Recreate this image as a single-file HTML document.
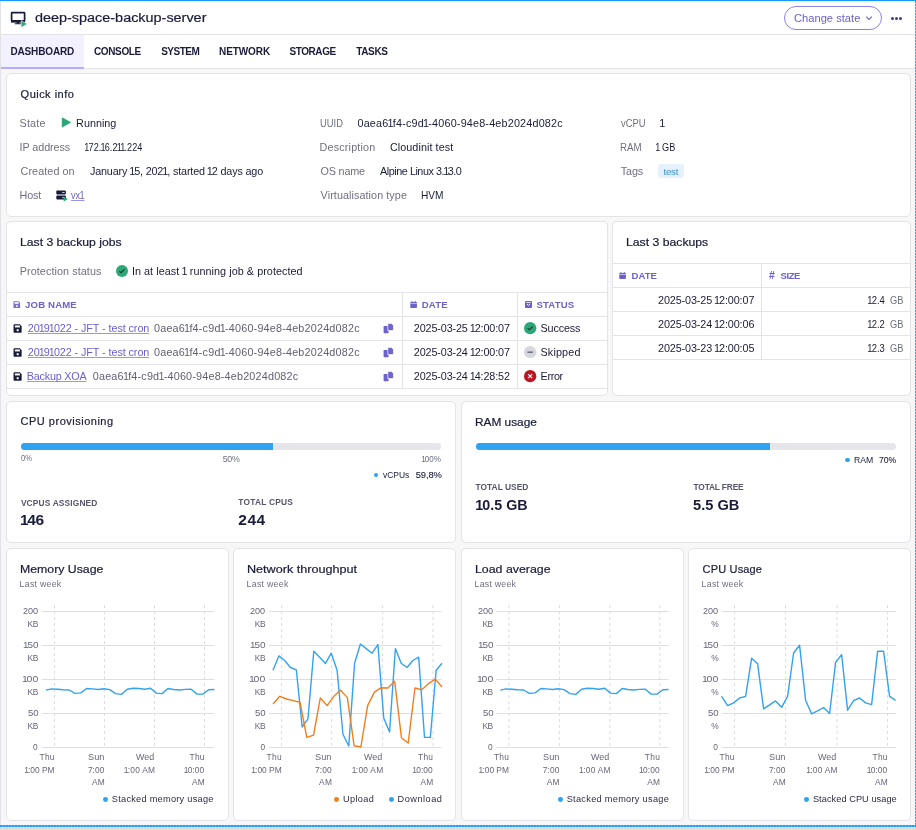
<!DOCTYPE html>
<html><head><meta charset="utf-8"><style>
html,body{margin:0;padding:0}
body{width:916px;height:830px;position:relative;overflow:hidden;background:#f7f7f8;font-family:'Liberation Sans', sans-serif}
.tw{position:absolute;left:0;top:0;width:916px;height:830px;will-change:transform}
.t{position:absolute;white-space:pre}
.t i{font-style:normal;margin:0 -0.9px}
.r{position:absolute}
.i{position:absolute;overflow:visible}
.card{position:absolute;box-sizing:border-box;background:#fff;border:1px solid #e3e3e8;border-radius:5px}
svg.ch{position:absolute;left:0;top:0}
</style></head><body>
<div class="r" style="left:0px;top:0px;width:916px;height:35px;background:#fff;"></div><div class="r" style="left:0px;top:35px;width:916px;height:33px;background:#fff;"></div><div class="r" style="left:1px;top:35px;width:83px;height:32px;background:#f3f1ff;"></div><div class="r" style="left:0px;top:34px;width:916px;height:1px;background:#e3e3e8;"></div><div class="r" style="left:0px;top:68px;width:916px;height:1px;background:#e3e3e8;"></div><div class="r" style="left:1px;top:67px;width:83px;height:2px;background:#b6aefa;"></div><div class="card" style="left:6px;top:73px;width:905px;height:144px;"></div><div class="card" style="left:6px;top:221px;width:602px;height:175px;"></div><div class="card" style="left:612px;top:221px;width:299px;height:175px;"></div><div class="card" style="left:6px;top:401px;width:450px;height:142px;"></div><div class="card" style="left:461px;top:401px;width:450px;height:142px;"></div><div class="card" style="left:6px;top:548px;width:223px;height:273px;"></div><div class="card" style="left:233px;top:548px;width:223px;height:273px;"></div><div class="card" style="left:461px;top:548px;width:223px;height:273px;"></div><div class="card" style="left:688px;top:548px;width:223px;height:273px;"></div><div class="r" style="left:7px;top:292px;width:600px;height:1px;background:#e3e3e8;"></div><div class="r" style="left:7px;top:316px;width:600px;height:1px;background:#e3e3e8;"></div><div class="r" style="left:7px;top:340px;width:600px;height:1px;background:#e3e3e8;"></div><div class="r" style="left:7px;top:364px;width:600px;height:1px;background:#e3e3e8;"></div><div class="r" style="left:7px;top:388px;width:600px;height:1px;background:#e3e3e8;"></div><div class="r" style="left:402px;top:293px;width:1px;height:95px;background:#e3e3e8;"></div><div class="r" style="left:517px;top:293px;width:1px;height:95px;background:#e3e3e8;"></div><div class="r" style="left:613px;top:263px;width:297px;height:1px;background:#e3e3e8;"></div><div class="r" style="left:613px;top:287px;width:297px;height:1px;background:#e3e3e8;"></div><div class="r" style="left:613px;top:311px;width:297px;height:1px;background:#e3e3e8;"></div><div class="r" style="left:613px;top:335px;width:297px;height:1px;background:#e3e3e8;"></div><div class="r" style="left:613px;top:359px;width:297px;height:1px;background:#e3e3e8;"></div><div class="r" style="left:761px;top:264px;width:1px;height:95px;background:#e3e3e8;"></div><div class="r" style="left:20.6px;top:443.3px;width:420.7px;height:6.3px;background:#e5e5ea;border-radius:4px;"></div><div class="r" style="left:20.6px;top:443.3px;width:252.6px;height:6.3px;background:#2ea3f2;border-radius:4px 0 0 4px;"></div><div class="r" style="left:475.6px;top:443.3px;width:420.6px;height:6.3px;background:#e5e5ea;border-radius:4px;"></div><div class="r" style="left:475.6px;top:443.3px;width:294.2px;height:6.3px;background:#2ea3f2;border-radius:4px 0 0 4px;"></div><div class="r" style="left:373.70px;top:472.60px;width:4.6px;height:4.6px;border-radius:50%;background:#2ea3f2"></div><div class="r" style="left:845.20px;top:457.70px;width:4.6px;height:4.6px;border-radius:50%;background:#2ea3f2"></div><div class="r" style="left:103.30px;top:796.80px;width:4.8px;height:4.8px;border-radius:50%;background:#2ea3f2"></div><div class="r" style="left:334.30px;top:796.80px;width:4.8px;height:4.8px;border-radius:50%;background:#f0821e"></div><div class="r" style="left:389.10px;top:796.80px;width:4.8px;height:4.8px;border-radius:50%;background:#2ea3f2"></div><div class="r" style="left:557.90px;top:796.80px;width:4.8px;height:4.8px;border-radius:50%;background:#2ea3f2"></div><div class="r" style="left:803.90px;top:796.80px;width:4.8px;height:4.8px;border-radius:50%;background:#2ea3f2"></div><div class="r" style="left:658.1px;top:163.5px;width:25.8px;height:14.3px;background:#e5f2fd;border-radius:3px;"></div><div class="r" style="left:784px;top:6px;width:98px;height:24px;border:1px solid #8c82e6;border-radius:12px;box-sizing:border-box"></div>
<svg class="ch" width="916" height="830" viewBox="0 0 916 830"><line x1="42.0" y1="611.5" x2="214.0" y2="611.5" stroke="#dedee4" stroke-width="1"/><line x1="42.0" y1="645.5" x2="214.0" y2="645.5" stroke="#dedee4" stroke-width="1"/><line x1="42.0" y1="679.5" x2="214.0" y2="679.5" stroke="#dedee4" stroke-width="1"/><line x1="42.0" y1="713.5" x2="214.0" y2="713.5" stroke="#dedee4" stroke-width="1"/><line x1="42.0" y1="747.5" x2="214.0" y2="747.5" stroke="#dedee4" stroke-width="1"/><line x1="54.5" y1="605" x2="54.5" y2="747" stroke="#dcdce3" stroke-width="1" stroke-dasharray="3 3"/><line x1="104.5" y1="605" x2="104.5" y2="747" stroke="#dcdce3" stroke-width="1" stroke-dasharray="3 3"/><line x1="154.5" y1="605" x2="154.5" y2="747" stroke="#dcdce3" stroke-width="1" stroke-dasharray="3 3"/><line x1="204.5" y1="605" x2="204.5" y2="747" stroke="#dcdce3" stroke-width="1" stroke-dasharray="3 3"/><line x1="268.9" y1="611.5" x2="441.5" y2="611.5" stroke="#dedee4" stroke-width="1"/><line x1="268.9" y1="645.5" x2="441.5" y2="645.5" stroke="#dedee4" stroke-width="1"/><line x1="268.9" y1="679.5" x2="441.5" y2="679.5" stroke="#dedee4" stroke-width="1"/><line x1="268.9" y1="713.5" x2="441.5" y2="713.5" stroke="#dedee4" stroke-width="1"/><line x1="268.9" y1="747.5" x2="441.5" y2="747.5" stroke="#dedee4" stroke-width="1"/><line x1="281.6" y1="605" x2="281.6" y2="747" stroke="#dcdce3" stroke-width="1" stroke-dasharray="3 3"/><line x1="331.7" y1="605" x2="331.7" y2="747" stroke="#dcdce3" stroke-width="1" stroke-dasharray="3 3"/><line x1="382.6" y1="605" x2="382.6" y2="747" stroke="#dcdce3" stroke-width="1" stroke-dasharray="3 3"/><line x1="433.0" y1="605" x2="433.0" y2="747" stroke="#dcdce3" stroke-width="1" stroke-dasharray="3 3"/><line x1="496.4" y1="611.5" x2="668.6" y2="611.5" stroke="#dedee4" stroke-width="1"/><line x1="496.4" y1="645.5" x2="668.6" y2="645.5" stroke="#dedee4" stroke-width="1"/><line x1="496.4" y1="679.5" x2="668.6" y2="679.5" stroke="#dedee4" stroke-width="1"/><line x1="496.4" y1="713.5" x2="668.6" y2="713.5" stroke="#dedee4" stroke-width="1"/><line x1="496.4" y1="747.5" x2="668.6" y2="747.5" stroke="#dedee4" stroke-width="1"/><line x1="508.9" y1="605" x2="508.9" y2="747" stroke="#dcdce3" stroke-width="1" stroke-dasharray="3 3"/><line x1="559.4" y1="605" x2="559.4" y2="747" stroke="#dcdce3" stroke-width="1" stroke-dasharray="3 3"/><line x1="609.9" y1="605" x2="609.9" y2="747" stroke="#dcdce3" stroke-width="1" stroke-dasharray="3 3"/><line x1="659.8" y1="605" x2="659.8" y2="747" stroke="#dcdce3" stroke-width="1" stroke-dasharray="3 3"/><line x1="722.0" y1="611.5" x2="896.0" y2="611.5" stroke="#dedee4" stroke-width="1"/><line x1="722.0" y1="645.5" x2="896.0" y2="645.5" stroke="#dedee4" stroke-width="1"/><line x1="722.0" y1="679.5" x2="896.0" y2="679.5" stroke="#dedee4" stroke-width="1"/><line x1="722.0" y1="713.5" x2="896.0" y2="713.5" stroke="#dedee4" stroke-width="1"/><line x1="722.0" y1="747.5" x2="896.0" y2="747.5" stroke="#dedee4" stroke-width="1"/><line x1="734.5" y1="605" x2="734.5" y2="747" stroke="#dcdce3" stroke-width="1" stroke-dasharray="3 3"/><line x1="785.5" y1="605" x2="785.5" y2="747" stroke="#dcdce3" stroke-width="1" stroke-dasharray="3 3"/><line x1="837.0" y1="605" x2="837.0" y2="747" stroke="#dcdce3" stroke-width="1" stroke-dasharray="3 3"/><line x1="887.5" y1="605" x2="887.5" y2="747" stroke="#dcdce3" stroke-width="1" stroke-dasharray="3 3"/><polyline points="45.90,690.1 51.71,688.9 57.52,689.2 63.33,689.8 69.14,690.0 74.95,693.4 80.76,692.9 86.57,688.5 92.38,688.9 98.19,689.5 104.00,688.7 109.81,689.6 115.62,693.6 121.43,694.4 127.24,689.3 133.06,688.2 138.87,688.5 144.68,689.2 150.49,688.2 156.30,693.1 162.11,693.6 167.92,688.5 173.73,689.5 179.54,690.0 185.35,689.4 191.16,689.2 196.97,694.1 202.78,694.1 208.59,689.8 214.40,689.5" fill="none" stroke="#33a3ef" stroke-width="1.4" stroke-linejoin="round"/><polyline points="500.30,690.1 506.10,688.9 511.91,689.2 517.71,689.8 523.51,690.0 529.32,693.4 535.12,692.9 540.92,688.5 546.73,688.9 552.53,689.5 558.33,688.7 564.14,689.6 569.94,693.6 575.74,694.4 581.55,689.3 587.35,688.2 593.16,688.5 598.96,689.2 604.76,688.2 610.57,693.1 616.37,693.6 622.17,688.5 627.98,689.5 633.78,690.0 639.58,689.4 645.39,689.2 651.19,694.1 656.99,694.1 662.80,689.8 668.60,689.5" fill="none" stroke="#33a3ef" stroke-width="1.4" stroke-linejoin="round"/><polyline points="273.00,670.2 278.83,655.9 284.66,660.5 290.48,667.5 296.31,669.8 302.14,727.0 307.97,718.8 313.79,651.3 319.62,657.2 325.45,663.4 331.28,653.2 337.10,670.2 342.93,734.3 348.76,746.0 354.59,663.2 360.41,644.0 366.24,648.6 372.07,653.2 377.90,644.6 383.72,718.0 389.55,732.0 395.38,648.6 401.21,663.2 407.03,667.5 412.86,660.5 418.69,657.2 424.52,737.4 430.34,737.4 436.17,670.2 442.00,663.2" fill="none" stroke="#33a3ef" stroke-width="1.4" stroke-linejoin="round"/><polyline points="273.00,704.0 279.76,696.3 286.52,699.0 293.28,700.6 300.04,702.3 306.80,737.4 313.56,735.1 320.32,697.9 327.08,705.6 333.84,696.3 340.60,690.1 347.36,697.6 354.12,745.7 360.88,747.0 367.64,705.6 374.40,692.1 381.16,687.7 387.92,688.0 394.68,681.3 401.44,737.7 408.20,743.0 414.96,688.0 421.72,689.7 428.48,683.7 435.24,679.1 442.00,687.0" fill="none" stroke="#ef7f1f" stroke-width="1.4" stroke-linejoin="round"/><polyline points="721.60,696.3 727.60,705.6 733.60,702.9 739.60,698.0 745.60,696.3 751.60,658.3 757.60,663.8 763.60,708.9 769.60,704.9 775.60,700.9 781.60,707.3 787.60,696.3 793.60,653.0 799.60,645.3 805.60,700.3 811.60,713.9 817.60,710.9 823.60,707.5 829.60,713.5 835.60,662.5 841.60,654.6 847.60,710.2 853.60,700.7 859.60,698.0 865.60,702.9 871.60,704.6 877.60,651.3 883.60,651.3 889.60,696.3 895.60,700.3" fill="none" stroke="#33a3ef" stroke-width="1.4" stroke-linejoin="round"/></svg>
<svg class="i" style="left:10px;top:11px" width="18" height="17" viewBox="0 0 18 17">
<rect x="1.6" y="1.6" width="13" height="8.4" rx="0.6" fill="none" stroke="#1a1b38" stroke-width="1.7"/>
<rect x="1" y="9" width="14" height="2.6" fill="#1a1b38"/>
<rect x="6.6" y="11" width="2.8" height="1.6" fill="#1a1b38"/>
<rect x="4.6" y="12.2" width="6.6" height="1.1" rx="0.5" fill="#1a1b38"/>
<path d="M11.2 9.5 L17.2 13 L11.2 16.5 Z" fill="#2ca878" stroke="#fff" stroke-width="0.5" stroke-linejoin="round"/>
</svg><div class="r" style="left:891.00px;top:16.50px;width:3.0px;height:3.0px;border-radius:50%;background:#3f3a8c"></div><div class="r" style="left:895.20px;top:16.50px;width:3.0px;height:3.0px;border-radius:50%;background:#3f3a8c"></div><div class="r" style="left:899.40px;top:16.50px;width:3.0px;height:3.0px;border-radius:50%;background:#3f3a8c"></div><svg class="i" style="left:865px;top:15px" width="8" height="6" viewBox="0 0 8 6"><path d="M1.2 1.6 L4 4.4 L6.8 1.6" fill="none" stroke="#6d62cc" stroke-width="1.1"/></svg><svg class="i" style="left:61px;top:117px" width="11" height="11" viewBox="0 0 11 11"><path d="M0.8 0.9 Q0.8 0.2 1.5 0.5 L9.6 4.9 Q10.2 5.3 9.6 5.7 L1.5 10.3 Q0.8 10.6 0.8 9.9 Z" fill="#2ca878"/></svg><svg class="i" style="left:56px;top:190px" width="12" height="12" viewBox="0 0 12 12">
<rect x="0.3" y="0.6" width="9.6" height="4" rx="1" fill="#1a1b38"/>
<rect x="0.3" y="5.6" width="9.6" height="4" rx="1" fill="#1a1b38"/>
<rect x="6.2" y="2" width="2.4" height="1" fill="#c9c9d6"/>
<rect x="6.2" y="7" width="2.4" height="1" fill="#c9c9d6"/>
<path d="M7.7 6.8 L12 9 L7.7 11.4 Z" fill="#2ca878"/>
</svg><svg class="i" style="left:116px;top:264.6px" width="12" height="12" viewBox="0 0 12 12"><circle cx="6" cy="6" r="6" fill="#2ca878"/><path d="M3.4 6.1 L5.1 7.7 L8.4 4.3" fill="none" stroke="#173c2e" stroke-width="1.2"/></svg><svg class="i" style="left:12.8px;top:300.8px" width="7.4" height="7.4" viewBox="0 0 10 10">
<path d="M0.6 1.2 Q0.6 0.4 1.4 0.4 L7.6 0.4 L9.6 2.4 L9.6 8.8 Q9.6 9.6 8.8 9.6 L1.4 9.6 Q0.6 9.6 0.6 8.8 Z" fill="#7a6fd3"/>
<rect x="2.1" y="1.6" width="5.6" height="2.2" fill="#fff"/>
<rect x="4.1" y="5.8" width="2.2" height="2.2" fill="#fff"/>
</svg><svg class="i" style="left:13.4px;top:323.9px" width="9.0" height="9.0" viewBox="0 0 10 10">
<path d="M0.6 1.2 Q0.6 0.4 1.4 0.4 L7.6 0.4 L9.6 2.4 L9.6 8.8 Q9.6 9.6 8.8 9.6 L1.4 9.6 Q0.6 9.6 0.6 8.8 Z" fill="#1a1b38"/>
<rect x="2.1" y="1.6" width="5.6" height="2.2" fill="#fff"/>
<rect x="4.1" y="5.8" width="2.2" height="2.2" fill="#fff"/>
</svg><svg class="i" style="left:13.4px;top:347.9px" width="9.0" height="9.0" viewBox="0 0 10 10">
<path d="M0.6 1.2 Q0.6 0.4 1.4 0.4 L7.6 0.4 L9.6 2.4 L9.6 8.8 Q9.6 9.6 8.8 9.6 L1.4 9.6 Q0.6 9.6 0.6 8.8 Z" fill="#1a1b38"/>
<rect x="2.1" y="1.6" width="5.6" height="2.2" fill="#fff"/>
<rect x="4.1" y="5.8" width="2.2" height="2.2" fill="#fff"/>
</svg><svg class="i" style="left:13.4px;top:372.0px" width="9.0" height="9.0" viewBox="0 0 10 10">
<path d="M0.6 1.2 Q0.6 0.4 1.4 0.4 L7.6 0.4 L9.6 2.4 L9.6 8.8 Q9.6 9.6 8.8 9.6 L1.4 9.6 Q0.6 9.6 0.6 8.8 Z" fill="#1a1b38"/>
<rect x="2.1" y="1.6" width="5.6" height="2.2" fill="#fff"/>
<rect x="4.1" y="5.8" width="2.2" height="2.2" fill="#fff"/>
</svg><svg class="i" style="left:383.2px;top:323.0px" width="11" height="11" viewBox="0 0 11 11">
<rect x="0.6" y="3" width="5" height="7.2" rx="0.6" fill="#6d62cc"/>
<path d="M4.8 0.6 L8.6 0.6 L10.4 2.4 L10.4 7.6 L4.8 7.6 Z" fill="#6d62cc" stroke="#fff" stroke-width="0.7"/>
</svg><svg class="i" style="left:383.2px;top:347.0px" width="11" height="11" viewBox="0 0 11 11">
<rect x="0.6" y="3" width="5" height="7.2" rx="0.6" fill="#6d62cc"/>
<path d="M4.8 0.6 L8.6 0.6 L10.4 2.4 L10.4 7.6 L4.8 7.6 Z" fill="#6d62cc" stroke="#fff" stroke-width="0.7"/>
</svg><svg class="i" style="left:383.2px;top:371.2px" width="11" height="11" viewBox="0 0 11 11">
<rect x="0.6" y="3" width="5" height="7.2" rx="0.6" fill="#6d62cc"/>
<path d="M4.8 0.6 L8.6 0.6 L10.4 2.4 L10.4 7.6 L4.8 7.6 Z" fill="#6d62cc" stroke="#fff" stroke-width="0.7"/>
</svg><svg class="i" style="left:409.8px;top:301.0px" width="7.2" height="7.2" viewBox="0 0 8 8">
<rect x="0.3" y="1.2" width="7.4" height="6.6" rx="0.8" fill="#6d62cc"/>
<rect x="1.6" y="0" width="1.1" height="1.8" fill="#6d62cc"/><rect x="5.3" y="0" width="1.1" height="1.8" fill="#6d62cc"/>
<rect x="0.3" y="2.6" width="7.4" height="0.6" fill="#fff"/>
</svg><svg class="i" style="left:619.4px;top:272.0px" width="7.2" height="7.2" viewBox="0 0 8 8">
<rect x="0.3" y="1.2" width="7.4" height="6.6" rx="0.8" fill="#6d62cc"/>
<rect x="1.6" y="0" width="1.1" height="1.8" fill="#6d62cc"/><rect x="5.3" y="0" width="1.1" height="1.8" fill="#6d62cc"/>
<rect x="0.3" y="2.6" width="7.4" height="0.6" fill="#fff"/>
</svg><svg class="i" style="left:524.6px;top:301.4px" width="7" height="7" viewBox="0 0 7 7"><rect x="0" y="0" width="7" height="7" rx="0.8" fill="#6d62cc"/><path d="M2 3 L3.5 4.5 L5 3" fill="none" stroke="#fff" stroke-width="1"/><rect x="1.2" y="1.2" width="4.6" height="0.8" fill="#fff"/></svg><svg class="i" style="left:524.3px;top:322.1px" width="12.3" height="12.3" viewBox="0 0 12 12"><circle cx="6" cy="6" r="6" fill="#2ca878"/><path d="M3.5 6.1 L5.1 7.6 L8.4 4.4" fill="none" stroke="#173c2e" stroke-width="1.1"/></svg><svg class="i" style="left:524.3px;top:346.0px" width="12.3" height="12.3" viewBox="0 0 12 12"><circle cx="6" cy="6" r="6" fill="#d7d7de"/><rect x="3.3" y="5.5" width="5.4" height="1" fill="#3a3b55"/></svg><svg class="i" style="left:524.3px;top:370.2px" width="12.3" height="12.3" viewBox="0 0 12 12"><circle cx="6" cy="6" r="6" fill="#c0121f"/><path d="M4 4 L8 8 M8 4 L4 8" stroke="#fff" stroke-width="1.1"/></svg>
<div class="tw"><div class="t" style="left:35.40px;top:11.60px;font-size:12.5px;line-height:12.5px;color:#1a1b38;transform:scaleX(1.153);transform-origin:0 0;-webkit-text-stroke:0.2px #1a1b38;">deep-space-backup-server</div><div class="t" style="left:793.60px;top:13.70px;font-size:10.2px;line-height:10.2px;color:#6d62cc;transform:scaleX(1.095);transform-origin:0 0;">Change state</div><div class="t" style="left:10.40px;top:47.10px;font-size:10.0px;line-height:10.0px;color:#1a1b38;font-weight:700;letter-spacing:-0.138px;">DASHBOARD</div><div class="t" style="left:94.00px;top:47.10px;font-size:10.0px;line-height:10.0px;color:#1a1b38;font-weight:700;letter-spacing:-0.367px;">CONSOLE</div><div class="t" style="left:161.20px;top:47.10px;font-size:10.0px;line-height:10.0px;color:#1a1b38;font-weight:700;letter-spacing:-0.5px;">SYSTEM</div><div class="t" style="left:219.00px;top:47.10px;font-size:10.0px;line-height:10.0px;color:#1a1b38;font-weight:700;letter-spacing:-0.083px;">NETWORK</div><div class="t" style="left:289.40px;top:47.10px;font-size:10.0px;line-height:10.0px;color:#1a1b38;font-weight:700;letter-spacing:-0.417px;">STORAGE</div><div class="t" style="left:356.20px;top:47.10px;font-size:10.0px;line-height:10.0px;color:#1a1b38;font-weight:700;letter-spacing:-0.35px;">TASKS</div><div class="t" style="left:20.60px;top:89.00px;font-size:11px;line-height:11px;color:#1a1b38;letter-spacing:0.478px;-webkit-text-stroke:0.2px #1a1b38;">Quick info</div><div class="t" style="left:19.60px;top:117.70px;font-size:10.8px;line-height:10.8px;color:#6f6f82;letter-spacing:0.15px;">State</div><div class="t" style="left:76.10px;top:117.70px;font-size:10.8px;line-height:10.8px;color:#1a1b38;">Running</div><div class="t" style="left:19.60px;top:141.70px;font-size:10.8px;line-height:10.8px;color:#6f6f82;letter-spacing:-0.089px;">IP address</div><div class="t" style="left:85.00px;top:141.70px;font-size:10.8px;line-height:10.8px;color:#1a1b38;transform:scaleX(0.8426);transform-origin:0 0;"><i>1</i>72.<i>1</i>6.2<i>1</i><i>1</i>.224</div><div class="t" style="left:20.60px;top:165.80px;font-size:10.8px;line-height:10.8px;color:#6f6f82;letter-spacing:0.067px;">Created on</div><div class="t" style="left:89.90px;top:165.80px;font-size:10.8px;line-height:10.8px;color:#1a1b38;letter-spacing:-0.158px;">January <i>1</i>5, 202<i>1</i>, started <i>1</i>2 days ago</div><div class="t" style="left:19.60px;top:189.90px;font-size:10.8px;line-height:10.8px;color:#6f6f82;letter-spacing:-0.167px;">Host</div><div class="t" style="left:70.90px;top:189.90px;font-size:10.8px;line-height:10.8px;color:#6a5fd0;transform:scaleX(0.85);transform-origin:0 0;text-decoration:underline;text-underline-offset:1px;text-decoration-thickness:1px;text-decoration-color:#9d94ea;text-decoration-skip-ink:none;">vx<i>1</i></div><div class="t" style="left:319.60px;top:117.70px;font-size:10.8px;line-height:10.8px;color:#6f6f82;transform:scaleX(0.868);transform-origin:0 0;">UUID</div><div class="t" style="left:357.50px;top:117.70px;font-size:10.8px;line-height:10.8px;color:#1a1b38;letter-spacing:0.18px;">0aea6<i>1</i>f4-c9d<i>1</i>-4060-94e8-4eb2024d082c</div><div class="t" style="left:319.60px;top:141.70px;font-size:10.8px;line-height:10.8px;color:#6f6f82;letter-spacing:0.16px;">Description</div><div class="t" style="left:389.90px;top:141.70px;font-size:10.8px;line-height:10.8px;color:#1a1b38;letter-spacing:0.069px;">Cloudinit test</div><div class="t" style="left:320.60px;top:165.80px;font-size:10.8px;line-height:10.8px;color:#6f6f82;letter-spacing:-0.2px;">OS name</div><div class="t" style="left:380.10px;top:165.80px;font-size:10.8px;line-height:10.8px;color:#1a1b38;letter-spacing:-0.461px;">Alpine Linux 3.<i>1</i>3.0</div><div class="t" style="left:320.60px;top:189.90px;font-size:10.8px;line-height:10.8px;color:#6f6f82;letter-spacing:0.072px;">Virtualisation type</div><div class="t" style="left:421.30px;top:189.90px;font-size:10.8px;line-height:10.8px;color:#1a1b38;transform:scaleX(0.9409);transform-origin:0 0;">HVM</div><div class="t" style="left:620.80px;top:117.70px;font-size:10.8px;line-height:10.8px;color:#6f6f82;transform:scaleX(0.8679);transform-origin:0 0;">vCPU</div><div class="t" style="left:660.10px;top:117.70px;font-size:10.8px;line-height:10.8px;color:#1a1b38;"><i>1</i></div><div class="t" style="left:619.80px;top:141.70px;font-size:10.8px;line-height:10.8px;color:#6f6f82;transform:scaleX(0.9);transform-origin:0 0;">RAM</div><div class="t" style="left:656.20px;top:141.70px;font-size:10.8px;line-height:10.8px;color:#1a1b38;transform:scaleX(0.8455);transform-origin:0 0;"><i>1</i> GB</div><div class="t" style="left:620.80px;top:165.80px;font-size:10.8px;line-height:10.8px;color:#6f6f82;letter-spacing:-0.133px;">Tags</div><div class="t" style="left:663.50px;top:166.80px;font-size:9.8px;line-height:9.8px;color:#3d8fd0;letter-spacing:-0.3px;">test</div><div class="t" style="left:19.70px;top:237.30px;font-size:11px;line-height:11px;color:#1a1b38;transform:scaleX(1.1066);transform-origin:0 0;-webkit-text-stroke:0.2px #1a1b38;">Last 3 backup jobs</div><div class="t" style="left:19.70px;top:265.50px;font-size:10.8px;line-height:10.8px;color:#6f6f82;letter-spacing:0.081px;">Protection status</div><div class="t" style="left:131.90px;top:265.50px;font-size:10.8px;line-height:10.8px;color:#1a1b38;letter-spacing:0.056px;">In at least <i>1</i> running job &amp; protected</div><div class="t" style="left:25.10px;top:299.90px;font-size:9.6px;line-height:9.6px;color:#6d62cc;font-weight:700;letter-spacing:0.143px;">JOB NAME</div><div class="t" style="left:421.80px;top:300.00px;font-size:9.6px;line-height:9.6px;color:#6d62cc;font-weight:700;letter-spacing:0.133px;">DATE</div><div class="t" style="left:536.50px;top:300.00px;font-size:9.6px;line-height:9.6px;color:#6d62cc;font-weight:700;letter-spacing:0.16px;">STATUS</div><div class="t" style="left:27.80px;top:322.70px;font-size:10.8px;line-height:10.8px;color:#6a5fd0;letter-spacing:-0.08px;text-decoration:underline;text-underline-offset:1px;text-decoration-thickness:1px;text-decoration-color:#9d94ea;text-decoration-skip-ink:none;">20<i>1</i>9<i>1</i>022 - JFT - test cron</div><div class="t" style="left:154.00px;top:322.70px;font-size:10.8px;line-height:10.8px;color:#5f5f72;letter-spacing:0.194px;">0aea6<i>1</i>f4-c9d<i>1</i>-4060-94e8-4eb2024d082c</div><div class="t" style="left:27.80px;top:346.70px;font-size:10.8px;line-height:10.8px;color:#6a5fd0;letter-spacing:-0.08px;text-decoration:underline;text-underline-offset:1px;text-decoration-thickness:1px;text-decoration-color:#9d94ea;text-decoration-skip-ink:none;">20<i>1</i>9<i>1</i>022 - JFT - test cron</div><div class="t" style="left:154.00px;top:346.70px;font-size:10.8px;line-height:10.8px;color:#5f5f72;letter-spacing:0.194px;">0aea6<i>1</i>f4-c9d<i>1</i>-4060-94e8-4eb2024d082c</div><div class="t" style="left:26.80px;top:371.00px;font-size:10.8px;line-height:10.8px;color:#6a5fd0;letter-spacing:-0.222px;text-decoration:underline;text-underline-offset:1px;text-decoration-thickness:1px;text-decoration-color:#9d94ea;text-decoration-skip-ink:none;">Backup XOA</div><div class="t" style="left:92.80px;top:371.00px;font-size:10.8px;line-height:10.8px;color:#5f5f72;letter-spacing:0.186px;">0aea6<i>1</i>f4-c9d<i>1</i>-4060-94e8-4eb2024d082c</div><div class="t" style="left:413.80px;top:322.70px;font-size:10.8px;line-height:10.8px;color:#1a1b38;letter-spacing:-0.128px;">2025-03-25 <i>1</i>2:00:07</div><div class="t" style="left:413.80px;top:346.70px;font-size:10.8px;line-height:10.8px;color:#1a1b38;letter-spacing:-0.128px;">2025-03-24 <i>1</i>2:00:07</div><div class="t" style="left:413.80px;top:371.00px;font-size:10.8px;line-height:10.8px;color:#1a1b38;letter-spacing:-0.128px;">2025-03-24 <i>1</i>4:28:52</div><div class="t" style="left:540.50px;top:322.70px;font-size:10.8px;line-height:10.8px;color:#1a1b38;letter-spacing:-0.15px;">Success</div><div class="t" style="left:540.50px;top:346.70px;font-size:10.8px;line-height:10.8px;color:#1a1b38;letter-spacing:0.15px;">Skipped</div><div class="t" style="left:540.50px;top:371.00px;font-size:10.8px;line-height:10.8px;color:#1a1b38;letter-spacing:-0.325px;">Error</div><div class="t" style="left:625.90px;top:237.10px;font-size:11px;line-height:11px;color:#1a1b38;transform:scaleX(1.111);transform-origin:0 0;-webkit-text-stroke:0.2px #1a1b38;">Last 3 backups</div><div class="t" style="left:631.40px;top:271.30px;font-size:9.6px;line-height:9.6px;color:#6d62cc;font-weight:700;letter-spacing:0.067px;">DATE</div><div class="t" style="left:769.10px;top:270.90px;font-size:10.4px;line-height:10.4px;color:#6d62cc;font-weight:700;">#</div><div class="t" style="left:780.60px;top:270.80px;font-size:9.6px;line-height:9.6px;color:#6d62cc;font-weight:700;letter-spacing:-0.5px;">SIZE</div><div class="t" style="left:658.00px;top:294.50px;font-size:10.8px;line-height:10.8px;color:#1a1b38;letter-spacing:-0.117px;">2025-03-25 <i>1</i>2:00:07</div><div class="t" style="left:658.00px;top:318.60px;font-size:10.8px;line-height:10.8px;color:#1a1b38;letter-spacing:-0.117px;">2025-03-24 <i>1</i>2:00:06</div><div class="t" style="left:658.00px;top:342.60px;font-size:10.8px;line-height:10.8px;color:#1a1b38;letter-spacing:-0.117px;">2025-03-23 <i>1</i>2:00:05</div><div class="t" style="left:868.00px;top:294.50px;font-size:10.8px;line-height:10.8px;color:#1a1b38;transform:scaleX(0.8737);transform-origin:0 0;"><i>1</i>2.4</div><div class="t" style="left:890.00px;top:295.50px;font-size:10.0px;line-height:10.0px;color:#6f6f82;transform:scaleX(0.9286);transform-origin:0 0;">GB</div><div class="t" style="left:868.00px;top:318.60px;font-size:10.8px;line-height:10.8px;color:#1a1b38;transform:scaleX(0.8737);transform-origin:0 0;"><i>1</i>2.2</div><div class="t" style="left:890.00px;top:319.60px;font-size:10.0px;line-height:10.0px;color:#6f6f82;transform:scaleX(0.9286);transform-origin:0 0;">GB</div><div class="t" style="left:868.00px;top:342.60px;font-size:10.8px;line-height:10.8px;color:#1a1b38;transform:scaleX(0.8737);transform-origin:0 0;"><i>1</i>2.3</div><div class="t" style="left:890.00px;top:343.60px;font-size:10.0px;line-height:10.0px;color:#6f6f82;transform:scaleX(0.9286);transform-origin:0 0;">GB</div><div class="t" style="left:20.60px;top:416.20px;font-size:11px;line-height:11px;color:#1a1b38;letter-spacing:0.5px;-webkit-text-stroke:0.2px #1a1b38;">CPU provisioning</div><div class="t" style="left:20.60px;top:454.40px;font-size:8.8px;line-height:8.8px;color:#6f6f82;transform:scaleX(0.8692);transform-origin:0 0;">0%</div><div class="t" style="left:222.70px;top:454.60px;font-size:8.8px;line-height:8.8px;color:#6f6f82;letter-spacing:-0.25px;">50%</div><div class="t" style="left:422.00px;top:454.60px;font-size:8.8px;line-height:8.8px;color:#6f6f82;transform:scaleX(0.919);transform-origin:0 0;"><i>1</i>00%</div><div class="t" style="left:383.00px;top:469.60px;font-size:9.4px;line-height:9.4px;color:#1a1b38;transform:scaleX(0.9034);transform-origin:0 0;">vCPUs</div><div class="t" style="left:415.70px;top:469.60px;font-size:9.4px;line-height:9.4px;color:#1a1b38;letter-spacing:-0.1px;-webkit-text-stroke:0.1px #1a1b38;">59,8%</div><div class="t" style="left:20.90px;top:498.50px;font-size:8.4px;line-height:8.4px;color:#55566c;font-weight:700;letter-spacing:0.146px;">VCPUS ASSIGNED</div><div class="t" style="left:20.90px;top:512.10px;font-size:15.5px;line-height:15.5px;color:#1a1b38;font-weight:700;letter-spacing:-0.45px;"><i>1</i>46</div><div class="t" style="left:238.30px;top:498.40px;font-size:8.4px;line-height:8.4px;color:#55566c;font-weight:700;letter-spacing:0.222px;">TOTAL CPUS</div><div class="t" style="left:238.30px;top:512.30px;font-size:15.5px;line-height:15.5px;color:#1a1b38;font-weight:700;letter-spacing:0.5px;">244</div><div class="t" style="left:474.60px;top:416.50px;font-size:11px;line-height:11px;color:#1a1b38;transform:scaleX(1.0768);transform-origin:0 0;-webkit-text-stroke:0.2px #1a1b38;">RAM usage</div><div class="t" style="left:853.80px;top:455.00px;font-size:9.4px;line-height:9.4px;color:#1a1b38;transform:scaleX(0.9263);transform-origin:0 0;">RAM</div><div class="t" style="left:878.80px;top:455.00px;font-size:9.4px;line-height:9.4px;color:#1a1b38;transform:scaleX(0.9158);transform-origin:0 0;-webkit-text-stroke:0.1px #1a1b38;">70%</div><div class="t" style="left:475.60px;top:483.30px;font-size:8.4px;line-height:8.4px;color:#55566c;font-weight:700;letter-spacing:0.011px;">TOTAL USED</div><div class="t" style="left:475.60px;top:497.20px;font-size:15.5px;line-height:15.5px;color:#1a1b38;font-weight:700;transform:scaleX(0.9218);transform-origin:0 0;"><i>1</i>0.5 GB</div><div class="t" style="left:693.50px;top:483.30px;font-size:8.4px;line-height:8.4px;color:#55566c;font-weight:700;letter-spacing:-0.167px;">TOTAL FREE</div><div class="t" style="left:692.50px;top:497.20px;font-size:15.5px;line-height:15.5px;color:#1a1b38;font-weight:700;transform:scaleX(0.9437);transform-origin:0 0;">5.5 GB</div><div class="t" style="left:19.60px;top:564.00px;font-size:11px;line-height:11px;color:#1a1b38;transform:scaleX(1.1178);transform-origin:0 0;-webkit-text-stroke:0.2px #1a1b38;">Memory Usage</div><div class="t" style="left:19.60px;top:580.30px;font-size:8.8px;line-height:8.8px;color:#6f6f82;letter-spacing:0.25px;">Last week</div><div class="t" style="left:246.60px;top:564.00px;font-size:11px;line-height:11px;color:#1a1b38;transform:scaleX(1.1463);transform-origin:0 0;-webkit-text-stroke:0.2px #1a1b38;">Network throughput</div><div class="t" style="left:246.60px;top:580.30px;font-size:8.8px;line-height:8.8px;color:#6f6f82;letter-spacing:0.263px;">Last week</div><div class="t" style="left:474.60px;top:564.00px;font-size:11px;line-height:11px;color:#1a1b38;transform:scaleX(1.1227);transform-origin:0 0;-webkit-text-stroke:0.2px #1a1b38;">Load average</div><div class="t" style="left:474.60px;top:580.30px;font-size:8.8px;line-height:8.8px;color:#6f6f82;letter-spacing:0.213px;">Last week</div><div class="t" style="left:702.60px;top:564.00px;font-size:11px;line-height:11px;color:#1a1b38;letter-spacing:0.162px;-webkit-text-stroke:0.2px #1a1b38;">CPU Usage</div><div class="t" style="left:701.60px;top:580.30px;font-size:8.8px;line-height:8.8px;color:#6f6f82;letter-spacing:0.25px;">Last week</div><div class="t" style="left:22.90px;top:606.90px;font-size:8.4px;line-height:8.4px;color:#66667a;transform:scaleX(1.0857);transform-origin:0 0;">200</div><div class="t" style="left:27.50px;top:619.80px;font-size:8.4px;line-height:8.4px;color:#66667a;letter-spacing:-0.4px;">KB</div><div class="t" style="left:23.90px;top:640.90px;font-size:8.4px;line-height:8.4px;color:#66667a;transform:scaleX(1.1833);transform-origin:0 0;"><i>1</i>50</div><div class="t" style="left:27.50px;top:653.80px;font-size:8.4px;line-height:8.4px;color:#66667a;letter-spacing:-0.4px;">KB</div><div class="t" style="left:23.10px;top:674.90px;font-size:8.4px;line-height:8.4px;color:#66667a;transform:scaleX(1.25);transform-origin:0 0;"><i>1</i>00</div><div class="t" style="left:27.50px;top:687.80px;font-size:8.4px;line-height:8.4px;color:#66667a;letter-spacing:-0.4px;">KB</div><div class="t" style="left:27.80px;top:708.90px;font-size:8.4px;line-height:8.4px;color:#66667a;transform:scaleX(1.1444);transform-origin:0 0;">50</div><div class="t" style="left:27.50px;top:721.80px;font-size:8.4px;line-height:8.4px;color:#66667a;letter-spacing:-0.4px;">KB</div><div class="t" style="left:33.10px;top:742.90px;font-size:8.4px;line-height:8.4px;color:#66667a;">0</div><div class="t" style="left:39.50px;top:753.10px;font-size:8.4px;line-height:8.4px;color:#66667a;letter-spacing:0.3px;">Thu</div><div class="t" style="left:25.10px;top:765.70px;font-size:8.4px;line-height:8.4px;color:#66667a;"><i>1</i>:00 PM</div><div class="t" style="left:87.70px;top:753.10px;font-size:8.4px;line-height:8.4px;color:#66667a;transform:scaleX(1.1);transform-origin:0 0;">Sun</div><div class="t" style="left:87.90px;top:765.70px;font-size:8.4px;line-height:8.4px;color:#66667a;letter-spacing:0.067px;">7:00</div><div class="t" style="left:91.90px;top:778.30px;font-size:8.4px;line-height:8.4px;color:#66667a;letter-spacing:0.2px;">AM</div><div class="t" style="left:135.90px;top:753.10px;font-size:8.4px;line-height:8.4px;color:#66667a;transform:scaleX(1.0706);transform-origin:0 0;">Wed</div><div class="t" style="left:124.60px;top:765.70px;font-size:8.4px;line-height:8.4px;color:#66667a;letter-spacing:0.25px;"><i>1</i>:00 AM</div><div class="t" style="left:189.50px;top:753.10px;font-size:8.4px;line-height:8.4px;color:#66667a;letter-spacing:0.3px;">Thu</div><div class="t" style="left:184.70px;top:765.70px;font-size:8.4px;line-height:8.4px;color:#66667a;letter-spacing:0.1px;"><i>1</i>0:00</div><div class="t" style="left:191.90px;top:778.30px;font-size:8.4px;line-height:8.4px;color:#66667a;letter-spacing:0.2px;">AM</div><div class="t" style="left:250.20px;top:606.90px;font-size:8.4px;line-height:8.4px;color:#66667a;transform:scaleX(1.0857);transform-origin:0 0;">200</div><div class="t" style="left:254.80px;top:619.80px;font-size:8.4px;line-height:8.4px;color:#66667a;letter-spacing:-0.4px;">KB</div><div class="t" style="left:251.20px;top:640.90px;font-size:8.4px;line-height:8.4px;color:#66667a;transform:scaleX(1.1833);transform-origin:0 0;"><i>1</i>50</div><div class="t" style="left:254.80px;top:653.80px;font-size:8.4px;line-height:8.4px;color:#66667a;letter-spacing:-0.4px;">KB</div><div class="t" style="left:250.40px;top:674.90px;font-size:8.4px;line-height:8.4px;color:#66667a;transform:scaleX(1.25);transform-origin:0 0;"><i>1</i>00</div><div class="t" style="left:254.80px;top:687.80px;font-size:8.4px;line-height:8.4px;color:#66667a;letter-spacing:-0.4px;">KB</div><div class="t" style="left:255.10px;top:708.90px;font-size:8.4px;line-height:8.4px;color:#66667a;transform:scaleX(1.1444);transform-origin:0 0;">50</div><div class="t" style="left:254.80px;top:721.80px;font-size:8.4px;line-height:8.4px;color:#66667a;letter-spacing:-0.4px;">KB</div><div class="t" style="left:260.40px;top:742.90px;font-size:8.4px;line-height:8.4px;color:#66667a;">0</div><div class="t" style="left:266.60px;top:753.10px;font-size:8.4px;line-height:8.4px;color:#66667a;letter-spacing:0.3px;">Thu</div><div class="t" style="left:252.20px;top:765.70px;font-size:8.4px;line-height:8.4px;color:#66667a;"><i>1</i>:00 PM</div><div class="t" style="left:314.90px;top:753.10px;font-size:8.4px;line-height:8.4px;color:#66667a;transform:scaleX(1.1);transform-origin:0 0;">Sun</div><div class="t" style="left:315.10px;top:765.70px;font-size:8.4px;line-height:8.4px;color:#66667a;letter-spacing:0.067px;">7:00</div><div class="t" style="left:319.10px;top:778.30px;font-size:8.4px;line-height:8.4px;color:#66667a;letter-spacing:0.2px;">AM</div><div class="t" style="left:364.00px;top:753.10px;font-size:8.4px;line-height:8.4px;color:#66667a;transform:scaleX(1.0706);transform-origin:0 0;">Wed</div><div class="t" style="left:352.70px;top:765.70px;font-size:8.4px;line-height:8.4px;color:#66667a;letter-spacing:0.25px;"><i>1</i>:00 AM</div><div class="t" style="left:418.00px;top:753.10px;font-size:8.4px;line-height:8.4px;color:#66667a;letter-spacing:0.3px;">Thu</div><div class="t" style="left:413.20px;top:765.70px;font-size:8.4px;line-height:8.4px;color:#66667a;letter-spacing:0.1px;"><i>1</i>0:00</div><div class="t" style="left:420.40px;top:778.30px;font-size:8.4px;line-height:8.4px;color:#66667a;letter-spacing:0.2px;">AM</div><div class="t" style="left:477.80px;top:606.90px;font-size:8.4px;line-height:8.4px;color:#66667a;transform:scaleX(1.0857);transform-origin:0 0;">200</div><div class="t" style="left:482.40px;top:619.80px;font-size:8.4px;line-height:8.4px;color:#66667a;letter-spacing:-0.4px;">KB</div><div class="t" style="left:478.80px;top:640.90px;font-size:8.4px;line-height:8.4px;color:#66667a;transform:scaleX(1.1833);transform-origin:0 0;"><i>1</i>50</div><div class="t" style="left:482.40px;top:653.80px;font-size:8.4px;line-height:8.4px;color:#66667a;letter-spacing:-0.4px;">KB</div><div class="t" style="left:478.00px;top:674.90px;font-size:8.4px;line-height:8.4px;color:#66667a;transform:scaleX(1.25);transform-origin:0 0;"><i>1</i>00</div><div class="t" style="left:482.40px;top:687.80px;font-size:8.4px;line-height:8.4px;color:#66667a;letter-spacing:-0.4px;">KB</div><div class="t" style="left:482.70px;top:708.90px;font-size:8.4px;line-height:8.4px;color:#66667a;transform:scaleX(1.1444);transform-origin:0 0;">50</div><div class="t" style="left:482.40px;top:721.80px;font-size:8.4px;line-height:8.4px;color:#66667a;letter-spacing:-0.4px;">KB</div><div class="t" style="left:488.00px;top:742.90px;font-size:8.4px;line-height:8.4px;color:#66667a;">0</div><div class="t" style="left:493.90px;top:753.10px;font-size:8.4px;line-height:8.4px;color:#66667a;letter-spacing:0.3px;">Thu</div><div class="t" style="left:479.50px;top:765.70px;font-size:8.4px;line-height:8.4px;color:#66667a;"><i>1</i>:00 PM</div><div class="t" style="left:542.60px;top:753.10px;font-size:8.4px;line-height:8.4px;color:#66667a;transform:scaleX(1.1);transform-origin:0 0;">Sun</div><div class="t" style="left:542.80px;top:765.70px;font-size:8.4px;line-height:8.4px;color:#66667a;letter-spacing:0.067px;">7:00</div><div class="t" style="left:546.80px;top:778.30px;font-size:8.4px;line-height:8.4px;color:#66667a;letter-spacing:0.2px;">AM</div><div class="t" style="left:591.30px;top:753.10px;font-size:8.4px;line-height:8.4px;color:#66667a;transform:scaleX(1.0706);transform-origin:0 0;">Wed</div><div class="t" style="left:580.00px;top:765.70px;font-size:8.4px;line-height:8.4px;color:#66667a;letter-spacing:0.25px;"><i>1</i>:00 AM</div><div class="t" style="left:644.80px;top:753.10px;font-size:8.4px;line-height:8.4px;color:#66667a;letter-spacing:0.3px;">Thu</div><div class="t" style="left:640.00px;top:765.70px;font-size:8.4px;line-height:8.4px;color:#66667a;letter-spacing:0.1px;"><i>1</i>0:00</div><div class="t" style="left:647.20px;top:778.30px;font-size:8.4px;line-height:8.4px;color:#66667a;letter-spacing:0.2px;">AM</div><div class="t" style="left:703.10px;top:606.90px;font-size:8.4px;line-height:8.4px;color:#66667a;transform:scaleX(1.0857);transform-origin:0 0;">200</div><div class="t" style="left:711.30px;top:619.80px;font-size:8.4px;line-height:8.4px;color:#66667a;">%</div><div class="t" style="left:704.10px;top:640.90px;font-size:8.4px;line-height:8.4px;color:#66667a;transform:scaleX(1.1833);transform-origin:0 0;"><i>1</i>50</div><div class="t" style="left:711.30px;top:653.80px;font-size:8.4px;line-height:8.4px;color:#66667a;">%</div><div class="t" style="left:703.30px;top:674.90px;font-size:8.4px;line-height:8.4px;color:#66667a;transform:scaleX(1.25);transform-origin:0 0;"><i>1</i>00</div><div class="t" style="left:711.30px;top:687.80px;font-size:8.4px;line-height:8.4px;color:#66667a;">%</div><div class="t" style="left:708.00px;top:708.90px;font-size:8.4px;line-height:8.4px;color:#66667a;transform:scaleX(1.1444);transform-origin:0 0;">50</div><div class="t" style="left:711.30px;top:721.80px;font-size:8.4px;line-height:8.4px;color:#66667a;">%</div><div class="t" style="left:713.30px;top:742.90px;font-size:8.4px;line-height:8.4px;color:#66667a;">0</div><div class="t" style="left:719.50px;top:753.10px;font-size:8.4px;line-height:8.4px;color:#66667a;letter-spacing:0.3px;">Thu</div><div class="t" style="left:705.10px;top:765.70px;font-size:8.4px;line-height:8.4px;color:#66667a;"><i>1</i>:00 PM</div><div class="t" style="left:768.70px;top:753.10px;font-size:8.4px;line-height:8.4px;color:#66667a;transform:scaleX(1.1);transform-origin:0 0;">Sun</div><div class="t" style="left:768.90px;top:765.70px;font-size:8.4px;line-height:8.4px;color:#66667a;letter-spacing:0.067px;">7:00</div><div class="t" style="left:772.90px;top:778.30px;font-size:8.4px;line-height:8.4px;color:#66667a;letter-spacing:0.2px;">AM</div><div class="t" style="left:818.40px;top:753.10px;font-size:8.4px;line-height:8.4px;color:#66667a;transform:scaleX(1.0706);transform-origin:0 0;">Wed</div><div class="t" style="left:807.10px;top:765.70px;font-size:8.4px;line-height:8.4px;color:#66667a;letter-spacing:0.25px;"><i>1</i>:00 AM</div><div class="t" style="left:872.50px;top:753.10px;font-size:8.4px;line-height:8.4px;color:#66667a;letter-spacing:0.3px;">Thu</div><div class="t" style="left:867.70px;top:765.70px;font-size:8.4px;line-height:8.4px;color:#66667a;letter-spacing:0.1px;"><i>1</i>0:00</div><div class="t" style="left:874.90px;top:778.30px;font-size:8.4px;line-height:8.4px;color:#66667a;letter-spacing:0.2px;">AM</div><div class="t" style="left:111.80px;top:795.40px;font-size:9.2px;line-height:9.2px;color:#2b2c47;letter-spacing:0.268px;">Stacked memory usage</div><div class="t" style="left:343.00px;top:795.40px;font-size:9.2px;line-height:9.2px;color:#2b2c47;letter-spacing:0.36px;">Upload</div><div class="t" style="left:397.60px;top:795.40px;font-size:9.2px;line-height:9.2px;color:#2b2c47;letter-spacing:0.486px;">Download</div><div class="t" style="left:566.70px;top:795.40px;font-size:9.2px;line-height:9.2px;color:#2b2c47;letter-spacing:0.295px;">Stacked memory usage</div><div class="t" style="left:812.90px;top:795.40px;font-size:9.2px;line-height:9.2px;color:#2b2c47;letter-spacing:0.069px;">Stacked CPU usage</div></div>
<div class="r" style="left:0px;top:0px;width:916px;height:1px;background:#129bfc;"></div><div class="r" style="left:0px;top:1px;width:1px;height:826px;background:#e2e2e6;"></div><div class="r" style="left:915px;top:1px;width:1px;height:825px;background:repeating-linear-gradient(to bottom,#2aa5ff 0 2px,#b9ddff 2px 3px)"></div><div class="r" style="left:0;top:825px;width:916px;height:2px;background:repeating-linear-gradient(to right,#1e9fff 0 2px,#58b4ff 2px 3px)"></div><div class="r" style="left:0px;top:827px;width:916px;height:3px;background:#dcdcdc;"></div>
</body></html>
